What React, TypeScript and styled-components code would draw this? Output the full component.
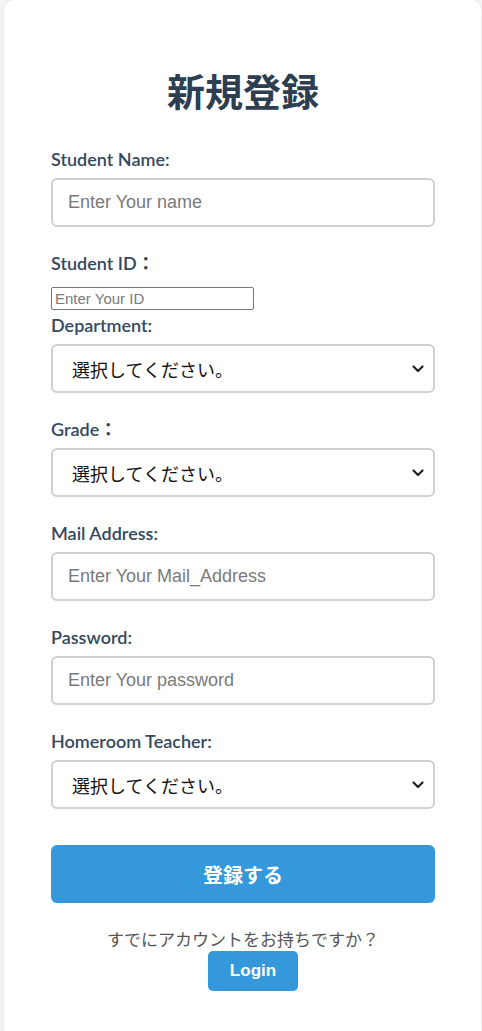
import React from "react";
import styled, { createGlobalStyle } from "styled-components";

const Global = createGlobalStyle`
  html, body { margin: 0; padding: 0; background: #f4f6f8; }
  body { font-family: Lato, "Noto Sans CJK JP", sans-serif; }
  * { box-sizing: border-box; }
`;

const Card = styled.div`
  margin: 0 1px 0 4px;
  min-height: 1040px;
  background: #ffffff;
  border-radius: 10px;
  box-shadow: 0 0 8px rgba(0, 0, 0, 0.08);
  padding: 62px 46px 40px 47px;
`;

const Title = styled.h1`
  margin: 0 0 31px;
  text-align: center;
  font-family: "Noto Sans CJK JP", sans-serif;
  font-size: 38px;
  font-weight: 700;
  color: #2c3e50;
  line-height: 55px;
`;

const Form = styled.form`
  display: flex;
  flex-direction: column;
`;

const Label = styled.label<{ $space?: number }>`
  display: block;
  font-family: Lato, "Noto Sans CJK JP", sans-serif;
  font-size: 18px;
  line-height: 22px;
  font-weight: 600;
  color: #34495e;
  margin-bottom: ${(p) => p.$space ?? 8}px;
`;

const Field = styled.div<{ $gap?: number }>`
  display: flex;
  flex-direction: column;
  margin-bottom: ${(p) => p.$gap ?? 25}px;
`;

const TextInput = styled.input`
  width: 100%;
  height: 49px;
  padding: 0 15px;
  border: 2px solid #d0d0d0;
  border-radius: 6px;
  font-family: "Liberation Sans", Arial, sans-serif;
  font-size: 18px;
  color: #222;
  background: #fff;
  &::placeholder { color: #7a7a7a; }
`;

const SmallInput = styled.input`
  width: 203px;
  height: 23px;
  padding: 1px 3px;
  border: 1px solid #767676;
  border-radius: 2px;
  font-family: "Liberation Sans", Arial, sans-serif;
  font-size: 15px;
  &::placeholder { color: #7a7a7a; }
`;

const SelectWrap = styled.div`
  position: relative;
  width: 100%;
`;

const Select = styled.select`
  appearance: none;
  -webkit-appearance: none;
  display: block;
  width: 100%;
  height: 49px;
  padding: 0 34px 0 19px;
  border: 2px solid #d0d0d0;
  border-radius: 6px;
  font-family: "Noto Sans CJK JP", sans-serif;
  font-size: 18px;
  color: #111;
  background: #fff;
`;

const Chevron = styled.svg`
  position: absolute;
  right: 11px;
  top: 50%;
  width: 12px;
  height: 8px;
  margin-top: -4px;
  pointer-events: none;
`;

const Submit = styled.button`
  width: 100%;
  height: 58px;
  margin-top: 11px;
  border: none;
  border-radius: 6px;
  background: #3498db;
  color: #fff;
  font-family: "Noto Sans CJK JP", sans-serif;
  font-size: 20px;
  font-weight: 700;
`;

const Footer = styled.div`
  display: flex;
  flex-direction: column;
  align-items: center;
  margin-top: 24px;
`;

const FooterText = styled.p`
  margin: 0;
  font-family: "Noto Sans CJK JP", sans-serif;
  font-size: 17px;
  color: #555;
  line-height: 24px;
`;

const LoginButton = styled.button`
  width: 90px;
  height: 40px;
  margin-left: 20px;
  border: none;
  border-radius: 5px;
  background: #3498db;
  color: #fff;
  font-family: "Liberation Sans", Arial, sans-serif;
  font-size: 17px;
  font-weight: 700;
`;

function ChoiceSelect() {
  return (
    <SelectWrap>
      <Select defaultValue="">
        <option value="">選択してください。</option>
      </Select>
      <Chevron viewBox="0 0 12 8" fill="none">
        <polyline points="1.5,1.5 6,6 10.5,1.5" stroke="#222" strokeWidth="2.2" strokeLinecap="round" strokeLinejoin="round" />
      </Chevron>
    </SelectWrap>
  );
}

export default function App() {
  return (
    <>
      <Global />
      <Card>
        <Title>新規登録</Title>
        <Form onSubmit={(e) => e.preventDefault()}>
          <Field>
            <Label>Student Name:</Label>
            <TextInput placeholder="Enter Your name" />
          </Field>
          <Field $gap={4}>
            <Label $space={13}>Student ID：</Label>
            <SmallInput placeholder="Enter Your ID" />
          </Field>
          <Field>
            <Label>Department:</Label>
            <ChoiceSelect />
          </Field>
          <Field>
            <Label>Grade：</Label>
            <ChoiceSelect />
          </Field>
          <Field>
            <Label>Mail Address:</Label>
            <TextInput placeholder="Enter Your Mail_Address" />
          </Field>
          <Field>
            <Label>Password:</Label>
            <TextInput type="password" placeholder="Enter Your password" />
          </Field>
          <Field>
            <Label>Homeroom Teacher:</Label>
            <ChoiceSelect />
          </Field>
          <Submit type="submit">登録する</Submit>
        </Form>
        <Footer>
          <FooterText>すでにアカウントをお持ちですか？</FooterText>
          <LoginButton type="button">Login</LoginButton>
        </Footer>
      </Card>
    </>
  );
}
